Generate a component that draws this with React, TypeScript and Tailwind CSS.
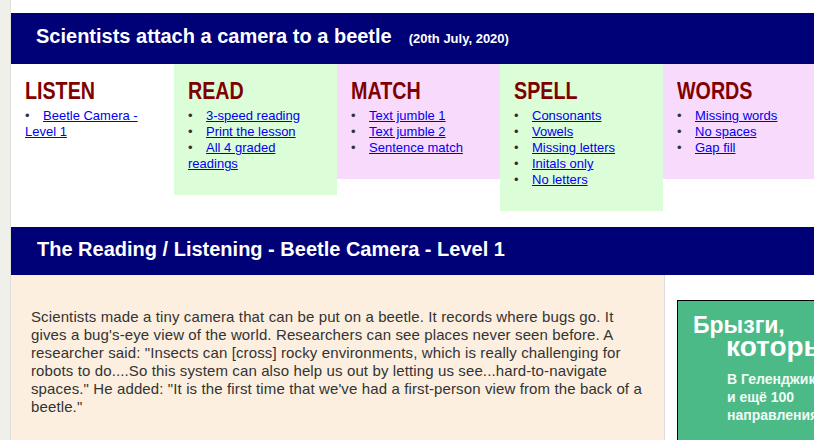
import React from 'react';

type Section = {
  title: string;
  bg: string;
  links: string[];
};

const sections: Section[] = [
  { title: 'LISTEN', bg: 'bg-white', links: ['Beetle Camera - Level 1'] },
  { title: 'READ', bg: 'bg-[#dbfdd8]', links: ['3-speed reading', 'Print the lesson', 'All 4 graded readings'] },
  { title: 'MATCH', bg: 'bg-[#f8dafc]', links: ['Text jumble 1', 'Text jumble 2', 'Sentence match'] },
  { title: 'SPELL', bg: 'bg-[#dbfdd8]', links: ['Consonants', 'Vowels', 'Missing letters', 'Initals only', 'No letters'] },
  { title: 'WORDS', bg: 'bg-[#f8dafc]', links: ['Missing words', 'No spaces', 'Gap fill'] },
];

const SectionBox: React.FC<{ section: Section }> = ({ section }) => (
  <div className={`w-[163px] flex-none pl-[14px] pr-[14px] pt-[14px] pb-[23px] ${section.bg}`}>
    <h2 className="mb-[4px] h-[26px] text-[24px] font-bold leading-[26px] text-[#800000]">
      <span className="inline-block origin-left scale-x-[0.82] whitespace-nowrap">{section.title}</span>
    </h2>
    <ul className="text-[13px] leading-[16px] text-[#333]">
      {section.links.map((link) => (
        <li key={link}>
          <span className="inline-block w-[18px]">•</span>
          <a href="#" className="text-[#0000ee] underline">
            {link}
          </a>
        </li>
      ))}
    </ul>
  </div>
);

export default function App() {
  return (
    <div className="flex h-[440px] w-[814px] overflow-hidden bg-white font-['Liberation_Sans',Arial,sans-serif]">
      {/* left gutter */}
      <div className="w-[11px] flex-none border-r border-[#e0e0da] bg-[#f0f0eb]" />

      <div className="w-[815px] flex-none pt-[13px]">
        {/* Title bar */}
        <div className="flex h-[51px] items-baseline bg-[#000077] pl-[25px] pt-[12px] text-white">
          <h1 className="text-[20px] font-bold leading-[23px]">Scientists attach a camera to a beetle</h1>
          <span className="ml-[17px] text-[13px] font-bold">(20th July, 2020)</span>
        </div>

        {/* Activity columns */}
        <div className="flex items-start">
          {sections.map((s) => (
            <SectionBox key={s.title} section={s} />
          ))}
        </div>

        {/* Reading header */}
        <div className="mt-[16px] h-[48px] bg-[#000077] pl-[26px] pt-[11px]">
          <h2 className="text-[20px] font-bold leading-[23px] text-white">
            The Reading / Listening - Beetle Camera - Level 1
          </h2>
        </div>

        {/* Body */}
        <div className="flex">
          <div className="h-[260px] w-[654px] flex-none border-r border-[#dddddd] bg-[#fcefdf] px-[20px] pt-[33px]">
            <p className="text-[15px] leading-[18px] tracking-[0.12px] text-[#333]">
              Scientists made a tiny camera that can be put on a beetle. It records where bugs go. It gives a
              bug's-eye view of the world. Researchers can see places never seen before. A researcher said: "Insects
              can [cross] rocky environments, which is really challenging for robots to do....So this system can also
              help us out by letting us see...hard-to-navigate spaces." He added: "It is the first time that we've
              had a first-person view from the back of a beetle."
            </p>
          </div>

          <div className="flex-none pl-[12px] pt-[25px]">
            <div className="h-[250px] w-[300px] border border-black bg-[#4bba87] pl-[15px] pt-[13px] text-white">
              <div className="whitespace-nowrap text-[23px] font-bold leading-[22px]">Брызги,</div>
              <div className="ml-[33px] mt-[-3px] whitespace-nowrap text-[28px] font-bold leading-[27px]">которые</div>
              <div className="ml-[34px] mt-[10px] whitespace-nowrap text-[14px] font-bold leading-[18px] text-[#f2fbf6]">
                В Геленджике
                <br />и ещё 100
                <br />
                направлениях
              </div>
            </div>
          </div>
        </div>
      </div>
    </div>
  );
}
